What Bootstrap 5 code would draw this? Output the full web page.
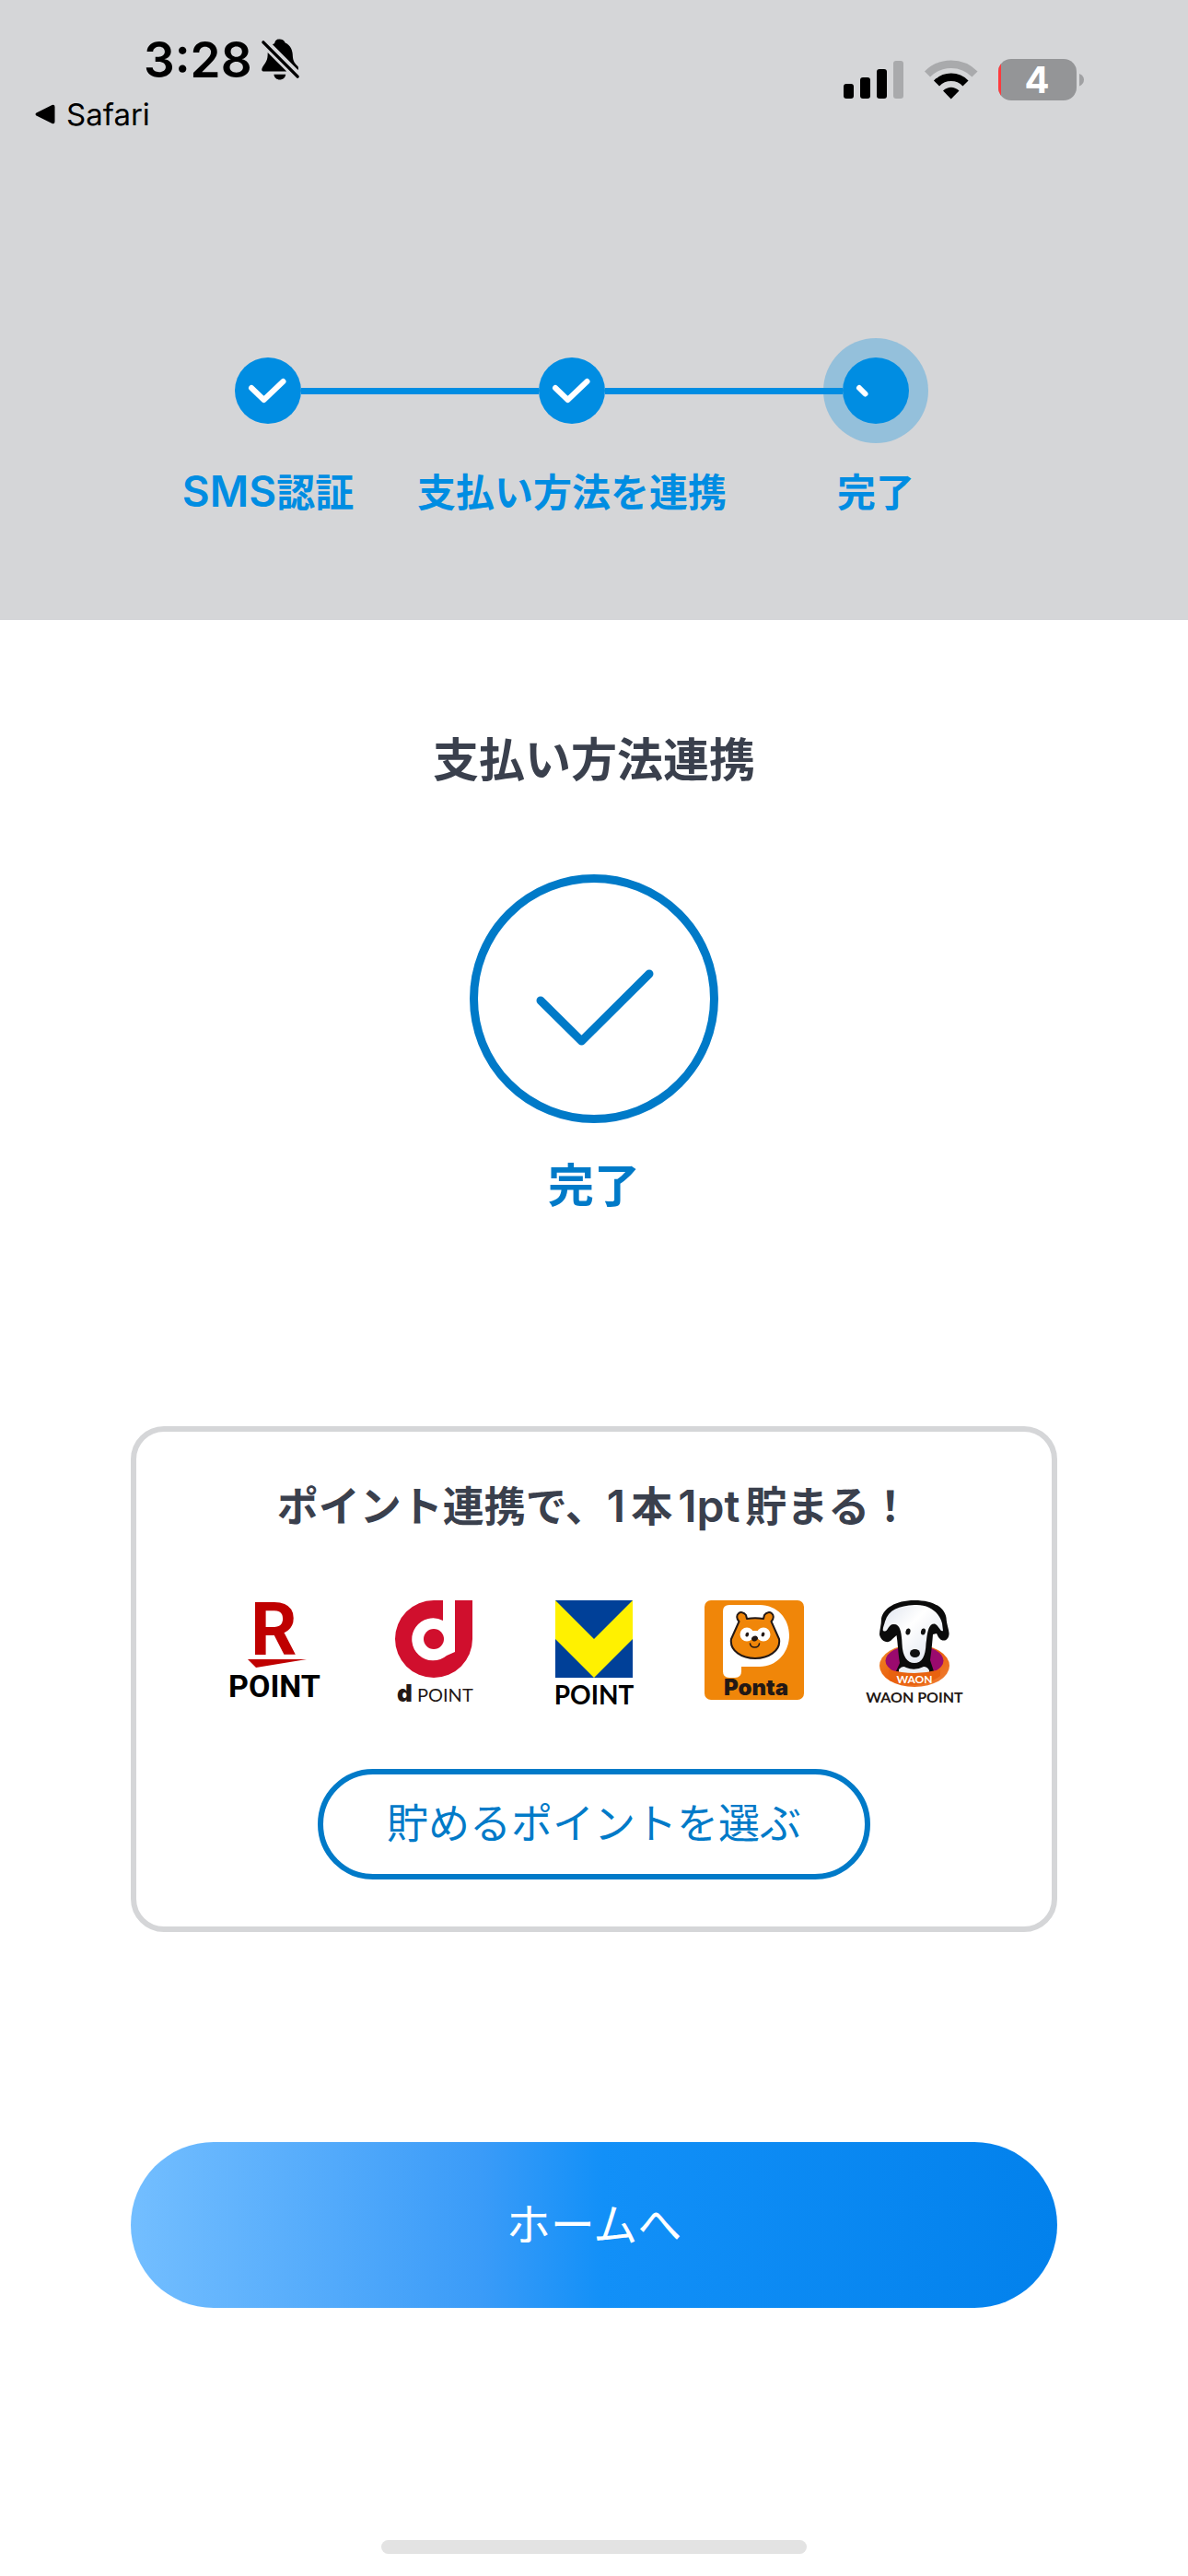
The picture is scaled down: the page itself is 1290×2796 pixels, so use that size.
<!DOCTYPE html>
<html lang="ja">
<head>
<meta charset="utf-8">
<meta name="viewport" content="width=device-width, initial-scale=1">
<title>支払い方法連携</title>
<link href="https://cdn.jsdelivr.net/npm/bootstrap@5.3.0/dist/css/bootstrap.min.css" rel="stylesheet">
<style>
  :root { --step: #008de2; --brand: #007ac8; --ink: #3a404d; --line: #d5d6d8; }
  body { font-family: Inter, "Noto Sans CJK JP", sans-serif; color: var(--ink); background: #fff; }
  .app-head { background: var(--line); padding-bottom: 110px; }
  .status { color: #000; padding: 33px 113px 0 38px; }
  .clock { font-size: 53px; line-height: 64px; font-weight: 600; padding-left: 118px; gap: 10px; }
  .back-link { color: #000; font-size: 33px; line-height: 40px; gap: 12px; margin-top: 7px; }
  .status-icons { gap: 23px; padding-top: 31px; }
  .stepper { margin: 244px 174px 0 126px; }
  .step { flex: 1 1 0; min-width: 0; color: var(--step); }
  .step-rail { flex: 1; height: 7px; background: var(--step); }
  .step:first-child .step-rail:first-child, .step:last-child .step-rail:last-child { background: transparent; }
  .step-dot { width: 72px; height: 72px; background: var(--step); }
  .step-now { box-shadow: 0 0 0 21px rgba(0, 141, 226, .3); }
  .step-label { font-size: 42px; line-height: 56px; font-weight: 600; margin-top: 47px; white-space: nowrap; }
  .step-label span { font-size: 46px; line-height: 1; }
  .content { padding: 120px 11% 24px; }
  .heading { font-size: 50px; line-height: 64px; font-weight: 600; margin: 0; }
  .done-mark { margin: 92px 0 36px; }
  .done-text { color: var(--brand); }
  .point-card { border: 6px solid var(--line); border-radius: 36px; margin-top: 229px; padding: 54px 0 51px; }
  .point-title { font-size: 45px; line-height: 56px; font-weight: 600; margin: 0; white-space: nowrap; }
  .point-title span { font-size: 48px; line-height: 1; margin-right: 6px; }
  .point-title span + span { margin-left: 6px; }
  .logos { gap: 66px; margin: 73px 0 63px; }
  .btn-choose { width: 600px; max-width: 90%; height: 120px; border: 6px solid var(--brand); color: var(--brand); font-size: 45px; line-height: 56px; padding: 0; }
  .btn-home { height: 180px; margin-top: 228px; border: 0; color: #fff; font-size: 48px; line-height: 64px;
    background: linear-gradient(90deg, #73beff 0%, #3a9bf8 38%, #1290f8 51%, #0281ec 100%); }
  .home-bar { width: 462px; height: 15px; background: #e3e3e3; margin-top: 252px; }
  svg { display: block; flex: none; overflow: visible; }
</style>
</head>
<body>
<header class="app-head">
  <div class="status d-flex justify-content-between align-items-start">
    <div>
      <div class="clock d-flex align-items-center">3:28
        <svg width="42" height="46" viewBox="0 0 44 48" aria-hidden="true">
          <path d="M7 17C7 24 5 27 1.500 31.500C-.5 35 0 37 3 37H28.500L7 15.500Z"/>
          <path d="M12.500 6.500C14 5.500 14.500 5.500 15 4.500C16 1 18 .5 20.500 .5C23 .5 25.500 1.500 27 4.500C33 7 35.500 13 35.500 20C36 26 38 28 41.500 31.500C42 33 42 34 41.500 35.500Z"/>
          <path d="M14 40.500H27.500C27 44.500 24 46.500 20.700 46.500S14.500 44.500 14 40.500Z"/>
          <path d="M2 4L41 43" stroke="#000" stroke-width="3.600" stroke-linecap="round"/>
        </svg>
      </div>
      <a href="#" class="back-link d-flex align-items-center text-decoration-none">
        <svg width="22" height="22" viewBox="0 0 22 22" aria-hidden="true"><path d="M1.500 9.500L18.500 1Q21.500 0 21.500 3V19Q21.500 22 18.500 21L1.500 12.500Q-.5 11 1.500 9.500Z"/></svg>Safari</a>
    </div>
    <div class="status-icons d-flex align-items-center">
      <svg width="65" height="45" viewBox="0 0 65 45" aria-label="電波">
        <rect x="0" y="27" width="11" height="16" rx="3"/><rect x="18" y="20" width="11" height="23" rx="3"/><rect x="36" y="11" width="11" height="32" rx="3"/><rect x="54" y="2" width="11" height="41" rx="3" fill="#a9aaac"/>
      </svg>
      <svg width="57" height="45" viewBox="0 0 57 45" aria-label="Wi-Fi">
        <path d="M3 16.500A36 36 0 0 1 54.500 16.500" fill="none" stroke="#a9aaac" stroke-width="8.500"/>
        <path d="M13 26.500A22 22 0 0 1 44.500 26.500" fill="none" stroke="#000" stroke-width="8.500"/>
        <path d="M28.700 43.500L20 34.500Q28.700 27 37.500 34.500Z"/>
      </svg>
      <svg width="93" height="45" viewBox="0 0 93 45" aria-label="バッテリー 4%">
        <defs><clipPath id="cell"><rect width="85" height="45" rx="14"/></clipPath></defs>
        <rect width="85" height="45" rx="14" fill="#949597"/>
        <rect width="3" height="45" fill="#ff3b3e" clip-path="url(#cell)"/>
        <path d="M88 16Q93 18 93 22.500T88 29.500Z" fill="#a0a1a3"/>
        <text x="42" y="37" text-anchor="middle" font-size="40" font-weight="700" fill="#fff">4</text>
      </svg>
    </div>
  </div>

  <div class="stepper d-flex text-center">
    <div class="step">
      <div class="d-flex align-items-center"><div class="step-rail"></div>
        <div class="step-dot rounded-circle"><svg width="72" height="72" viewBox="0 0 72 72"><path d="M18 33L31.500 46L52.500 26" fill="none" stroke="#fff" stroke-width="6" stroke-linecap="round" stroke-linejoin="round"/></svg></div>
        <div class="step-rail"></div></div>
      <div class="step-label d-flex justify-content-center align-items-baseline"><span>SMS</span>認証</div>
    </div>
    <div class="step">
      <div class="d-flex align-items-center"><div class="step-rail"></div>
        <div class="step-dot rounded-circle"><svg width="72" height="72" viewBox="0 0 72 72"><path d="M18 33L31.500 46L52.500 26" fill="none" stroke="#fff" stroke-width="6" stroke-linecap="round" stroke-linejoin="round"/></svg></div>
        <div class="step-rail"></div></div>
      <div class="step-label d-flex justify-content-center">支払い方法を連携</div>
    </div>
    <div class="step">
      <div class="d-flex align-items-center"><div class="step-rail"></div>
        <div class="step-dot step-now rounded-circle"><svg width="72" height="72" viewBox="0 0 72 72"><path d="M18 33L24.500 39.500" fill="none" stroke="#fff" stroke-width="6" stroke-linecap="round"/></svg></div>
        <div class="step-rail"></div></div>
      <div class="step-label d-flex justify-content-center">完了</div>
    </div>
  </div>
</header>

<main class="content d-flex flex-column align-items-center text-center">
  <h1 class="heading">支払い方法連携</h1>
  <svg class="done-mark" width="270" height="270" viewBox="0 0 270 270" fill="none" stroke="#007ac8" stroke-width="9" stroke-linecap="round" stroke-linejoin="round" aria-hidden="true">
    <circle cx="135" cy="135" r="130.500"/><path d="M77 137L121.500 181L195 108"/>
  </svg>
  <p class="heading done-text">完了</p>

  <section class="point-card w-100">
    <h2 class="point-title">ポイント連携で、<span>1</span>本<span>1pt</span>貯まる！</h2>
    <div class="logos d-flex justify-content-center">
      <svg width="108" height="120" viewBox="0 0 108 120" role="img" aria-label="R POINT">
        <text x="29" y="59" font-family="Roboto" font-weight="700" font-size="79" fill="#bf0000">R</text>
        <path d="M26 64H90L35 73Z" fill="#bf0000"/>
        <text x="55" y="105" text-anchor="middle" font-family="Roboto" font-weight="700" font-size="34">POINT</text>
      </svg>
      <svg width="108" height="120" viewBox="0 0 108 120" role="img" aria-label="d POINT">
        <path d="M54 0H64V22A23 23 0 1 0 68 60L77 56V0H96V42A42 42 0 1 1 54 0Z" fill="#d00f2d"/>
        <circle cx="54" cy="42" r="11" fill="#d00f2d"/>
        <text x="14" y="110" font-weight="900" font-size="26" fill="#231815">d</text>
        <text x="36" y="110" font-family="Lato" font-size="20" fill="#231815">POINT</text>
      </svg>
      <svg width="108" height="120" viewBox="0 0 108 120" role="img" aria-label="V POINT">
        <path d="M12 0H96V84H12Z" fill="#004098"/><path d="M12 0L54 42L96 0V42L54 84L12 42Z" fill="#fff100"/>
        <text x="54" y="113" text-anchor="middle" font-family="Lato" font-weight="700" font-size="28">POINT</text>
      </svg>
      <svg width="108" height="120" viewBox="0 0 108 120" role="img" aria-label="Ponta">
        <rect width="108" height="108" rx="7" fill="#f08609"/>
        <path d="M27 5H60C79 5 92 20 92 38S79 72 60 72H40V77Q40 84 33 84H27Q20 84 20 77V12Q20 5 27 5Z" fill="#fff"/>
        <path d="M37.500 23C31 16 40 9 45 16L46 20Q55 18.500 64 20L65 16C70 9 79 16 72.500 23L81 42C83 55 69 63 55 63S27 55 29 42Z" fill="#f08609" stroke="#231815" stroke-width="2" stroke-linejoin="round"/>
        <circle cx="46" cy="37" r="7.500" fill="#fff"/><circle cx="64" cy="37" r="7.500" fill="#fff"/><rect x="46" y="33" width="18" height="9" fill="#fff"/>
        <g fill="#231815"><ellipse cx="46.300" cy="37" rx="1.800" ry="2.500" transform="rotate(20 46 37)"/><ellipse cx="63.500" cy="37" rx="1.800" ry="2.500" transform="rotate(20 63.500 37)"/><ellipse cx="54.500" cy="41.500" rx="3.500" ry="2.800" transform="rotate(-20 54.500 41.500)"/></g>
        <path d="M49.500 47Q50 51 54.500 51T59.500 47" fill="none" stroke="#231815" stroke-width="1.600" stroke-linecap="round"/>
        <text x="56" y="103" text-anchor="middle" font-weight="900" font-size="24" fill="#231815">Ponta</text>
      </svg>
      <svg width="108" height="120" viewBox="0 0 108 120" role="img" aria-label="WAON POINT">
        <defs>
          <linearGradient id="fur" x1="0" y1="0" x2="1" y2="1"><stop offset="0" stop-color="#dfe4ee"/><stop offset=".4" stop-color="#fff"/><stop offset="1" stop-color="#dbe1ec"/></linearGradient>
          <linearGradient id="collar" x1="0" y1="0" x2="1" y2="1"><stop offset="0" stop-color="#f08a2c"/><stop offset=".5" stop-color="#ea5f0b"/><stop offset="1" stop-color="#f0833a"/></linearGradient>
        </defs>
        <ellipse cx="54" cy="71" rx="38" ry="23" fill="url(#collar)"/>
        <ellipse cx="54" cy="65.500" rx="31.500" ry="16.500" fill="#9a0a6e"/>
        <path d="M54 0C75 0 87 8 88.500 19C89 27 92 33 91.500 37C91 44 84 46 80 40L78 36L74 37C73 50 72 58 71 65L75 77Q54 82 34 77L38 68C36 55 36 47 34.500 38L30 42C24 49 17 43 16 37C16 32 18 27 18 20C20 9 33 0 54 0Z" fill="#0b0b0b"/>
        <path d="M54 5C70 4 81 13 84 25L85 33C82 35 81 28 76 25.500C69 25 68 35 66.500 47C66 61 62 68 54 68S41 61 40.500 47C40 36 39 25 31 26C25 26 25 36 20 33C19 31 21 27 22 23C26 10 37 6 54 5Z" fill="url(#fur)"/>
        <path d="M37 75Q41 70 45 73Q54 77 64 72Q68 72 70 76V80H37Z" fill="#edf0f5"/>
        <path d="M26 75Q54 83 82 75V82Q54 102 26 82Z" fill="#e8620f"/>
        <g fill="#111"><ellipse cx="47" cy="34" rx="2.500" ry="3.600" transform="rotate(12 47 34)"/><ellipse cx="63.500" cy="34" rx="2.500" ry="3.600" transform="rotate(12 63.500 34)"/><ellipse cx="54.500" cy="57.500" rx="5.500" ry="4.500"/></g>
        <text x="54" y="90" text-anchor="middle" font-family="Lato" font-weight="700" font-size="12" fill="#fff">WAON</text>
        <text x="54" y="111" text-anchor="middle" font-family="Lato" font-weight="700" font-size="16" fill="#231815">WAON POINT</text>
      </svg>
    </div>
    <button type="button" class="btn btn-choose rounded-pill">貯めるポイントを選ぶ</button>
  </section>

  <button type="button" class="btn btn-home rounded-pill w-100">ホームへ</button>
  <div class="home-bar rounded-pill"></div>
</main>
<script src="https://cdn.jsdelivr.net/npm/bootstrap@5.3.0/dist/js/bootstrap.bundle.min.js"></script>
</body>
</html>
